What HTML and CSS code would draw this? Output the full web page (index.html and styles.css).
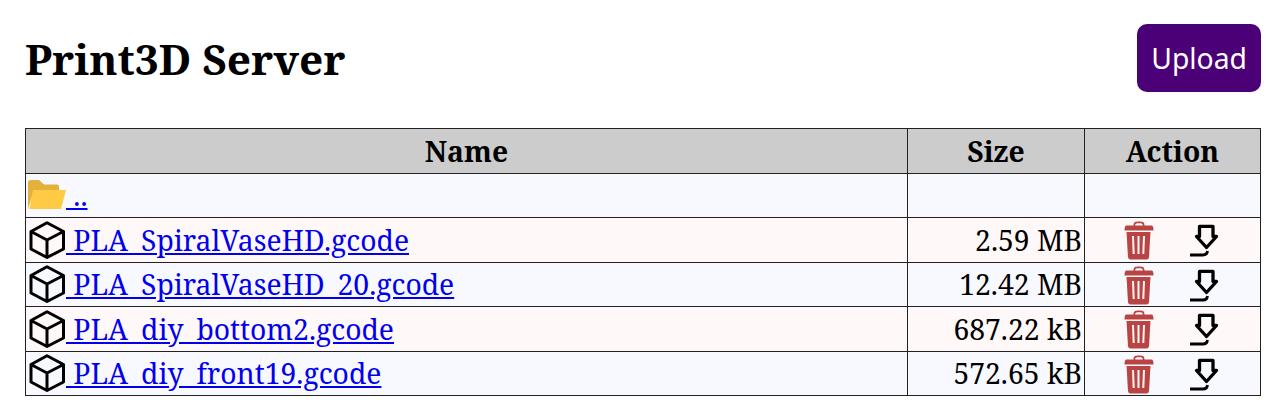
FILE: index.html
```html
<!DOCTYPE html>
<html>
<head>
<meta charset="utf-8">
<title>Print3D Server</title>
<link rel="stylesheet" href="styles.css">
</head>
<body>

<svg class="defs" width="0" height="0">
  <symbol id="cube" viewBox="0 0 38 38">
    <path d="M19 1.7 L35.5 10.5 V28 L19 36.5 L3 28 V10.5 Z M3 10.5 L19 19 L35.5 10.5 M19 19 V36.5" fill="none" stroke="#000" stroke-width="3" stroke-linejoin="round"/>
  </symbol>
  <symbol id="trash" viewBox="0 0 30 39">
    <path d="M9.5 5 C9.5 1 11 0.5 15 0.5 C19 0.5 20.5 1 20.5 5 H18.8 C18.8 2.6 18 2.2 15 2.2 C12 2.2 11.2 2.6 11.2 5 Z" fill="#b94444"/>
    <path d="M2.5 4.5 H27.5 Q29.5 4.5 29.5 9.5 H0.5 Q0.5 4.5 2.5 4.5 Z" fill="#b94444"/>
    <path d="M2.5 11 H26.5 L25 36 Q24.8 38.5 22.5 38.5 H6.5 Q4.2 38.5 4 36 Z" fill="#b94444"/>
    <path d="M9 15 L9.7 33 M14.5 15 V33 M20 15 L19.3 33" stroke="#fff5f5" stroke-width="2" fill="none"/>
  </symbol>
  <symbol id="fetch" viewBox="0 0 30 33">
    <path d="M10.5 2.4 H24 V12.5 H27.5 L17.5 23.5 L7.5 12.5 H10.5 Z" fill="none" stroke="#000" stroke-width="3.3" stroke-linejoin="round"/>
    <path d="M1 31 H14 Q18 31 18.5 27" fill="none" stroke="#000" stroke-width="2.8"/>
  </symbol>
</svg>

<div class="top">
  <h1>Print3D Server</h1>
  <a href="#" class="upload">Upload</a>
</div>

<table class="files">
  <tr>
    <th class="name">Name</th>
    <th class="size">Size</th>
    <th class="action">Action</th>
  </tr>
  <tr>
    <td>
      <a href="#"><svg class="icon folder" viewBox="0 0 38 29"><path d="M0 29 V2.5 Q0 0 2.5 0 H11 L16 4.5 H29 Q31 4.5 31 6.5 V10 H6 L0 29 Z" fill="#e3b23c"/><path d="M5 10 H38 L33 29 H1.5 Z" fill="#ffcb45"/></svg> ..</a>
    </td>
    <td></td>
    <td></td>
  </tr>
  <tr>
    <td><a href="#"><svg class="icon"><use href="#cube"/></svg> PLA_SpiralVaseHD.gcode</a></td>
    <td class="num">2.59 MB</td>
    <td class="tools"><svg class="trash"><use href="#trash"/></svg><svg class="fetch"><use href="#fetch"/></svg></td>
  </tr>
  <tr>
    <td><a href="#"><svg class="icon"><use href="#cube"/></svg> PLA_SpiralVaseHD_20.gcode</a></td>
    <td class="num">12.42 MB</td>
    <td class="tools"><svg class="trash"><use href="#trash"/></svg><svg class="fetch"><use href="#fetch"/></svg></td>
  </tr>
  <tr>
    <td><a href="#"><svg class="icon"><use href="#cube"/></svg> PLA_diy_bottom2.gcode</a></td>
    <td class="num">687.22 kB</td>
    <td class="tools"><svg class="trash"><use href="#trash"/></svg><svg class="fetch"><use href="#fetch"/></svg></td>
  </tr>
  <tr>
    <td><a href="#"><svg class="icon"><use href="#cube"/></svg> PLA_diy_front19.gcode</a></td>
    <td class="num">572.65 kB</td>
    <td class="tools"><svg class="trash"><use href="#trash"/></svg><svg class="fetch"><use href="#fetch"/></svg></td>
  </tr>
</table>

</body>
</html>
```

FILE: styles.css
```css
body
{
margin:0;
padding:24px 25px 0 25px;
font-family:"Noto Serif","DejaVu Serif",serif;
font-size:28.3px;
background:white;
color:black;
}

.defs
{
position:absolute;
}

.top
{
display:flex;
justify-content:space-between;
align-items:center;
height:68px;
margin-bottom:36px;
}

h1
{
margin:0;
font-size:42.45px;
font-weight:bold;
}

a.upload
{
display:block;
padding:0 14px;
line-height:68px;
border-radius:10px;
background:#4b0078;
color:white;
text-decoration:none;
font-family:"Noto Sans",sans-serif;
font-size:28.3px;
}

table.files
{
width:100%;
border-collapse:collapse;
table-layout:fixed;
}

table.files th, table.files td
{
border:1px solid #222;
padding:0 2px;
height:44.5px;
box-sizing:border-box;
white-space:nowrap;
line-height:36px;
}

table.files th
{
background:#ccc;
font-size:28.3px;
height:44.6px;
}

th.size
{
width:177px;
}

th.action
{
width:176px;
}

table.files tr:nth-child(even) td
{
background:#f8f9ff;
}

table.files tr:nth-child(odd) td
{
background:#fff8f8;
}

td a
{
color:#0000ee;
}

td.num
{
text-align:right;
}

svg.icon
{
width:38px;
height:38px;
vertical-align:-8px;
}

svg.folder
{
width:38px;
height:29px;
vertical-align:-3px;
}

table.files td.tools
{
padding-left:38.5px;
}

svg.trash
{
width:30px;
height:39px;
vertical-align:middle;
}

svg.fetch
{
width:30px;
height:33px;
margin-left:35px;
vertical-align:middle;
}
```
